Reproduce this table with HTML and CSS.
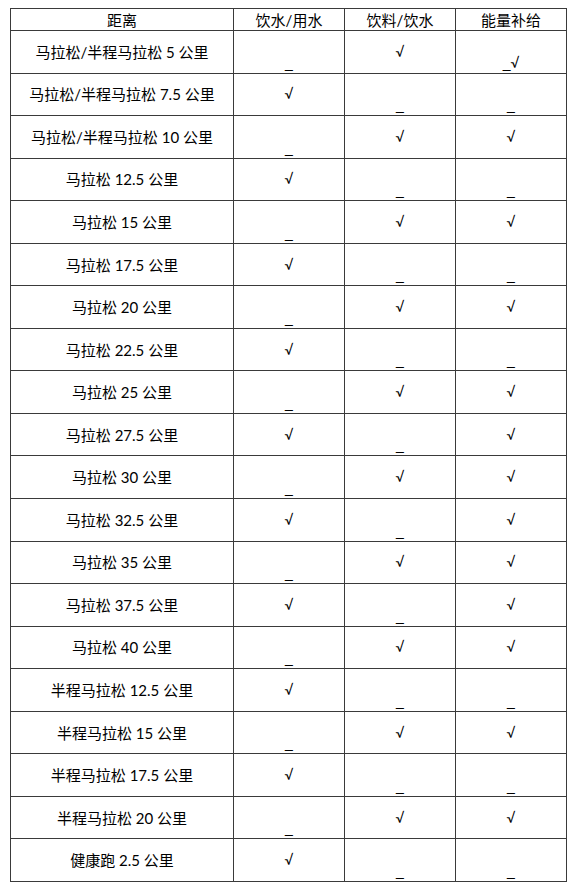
FILE: index.html
```html
<!DOCTYPE html>
<html lang="zh">
<head>
<meta charset="utf-8">
<link rel="stylesheet" href="styles.css">
</head>
<body>
<table class="grid">
<colgroup><col class="c1"><col class="c2"><col class="c3"><col class="c4"></colgroup>
<thead>
<tr class="head"><th>距离</th><th>饮水/用水</th><th>饮料/饮水</th><th>能量补给</th></tr>
</thead>
<tbody>
<tr><td class="name">马拉松/半程马拉松 5 公里</td><td class="low">_</td><td class="mid">√</td><td class="low">_<span class="tick">√</span></td></tr>
<tr><td class="name">马拉松/半程马拉松 7.5 公里</td><td class="mid">√</td><td class="low">_</td><td class="low">_</td></tr>
<tr><td class="name">马拉松/半程马拉松 10 公里</td><td class="low">_</td><td class="mid">√</td><td class="mid">√</td></tr>
<tr><td class="name">马拉松 12.5 公里</td><td class="mid">√</td><td class="low">_</td><td class="low">_</td></tr>
<tr><td class="name">马拉松 15 公里</td><td class="low">_</td><td class="mid">√</td><td class="mid">√</td></tr>
<tr><td class="name">马拉松 17.5 公里</td><td class="mid">√</td><td class="low">_</td><td class="low">_</td></tr>
<tr><td class="name">马拉松 20 公里</td><td class="low">_</td><td class="mid">√</td><td class="mid">√</td></tr>
<tr><td class="name">马拉松 22.5 公里</td><td class="mid">√</td><td class="low">_</td><td class="low">_</td></tr>
<tr><td class="name">马拉松 25 公里</td><td class="low">_</td><td class="mid">√</td><td class="mid">√</td></tr>
<tr><td class="name">马拉松 27.5 公里</td><td class="mid">√</td><td class="low">_</td><td class="mid">√</td></tr>
<tr><td class="name">马拉松 30 公里</td><td class="low">_</td><td class="mid">√</td><td class="mid">√</td></tr>
<tr><td class="name">马拉松 32.5 公里</td><td class="mid">√</td><td class="low">_</td><td class="mid">√</td></tr>
<tr><td class="name">马拉松 35 公里</td><td class="low">_</td><td class="mid">√</td><td class="mid">√</td></tr>
<tr><td class="name">马拉松 37.5 公里</td><td class="mid">√</td><td class="low">_</td><td class="mid">√</td></tr>
<tr><td class="name">马拉松 40 公里</td><td class="low">_</td><td class="mid">√</td><td class="mid">√</td></tr>
<tr><td class="name">半程马拉松 12.5 公里</td><td class="mid">√</td><td class="low">_</td><td class="low">_</td></tr>
<tr><td class="name">半程马拉松 15 公里</td><td class="low">_</td><td class="mid">√</td><td class="mid">√</td></tr>
<tr><td class="name">半程马拉松 17.5 公里</td><td class="mid">√</td><td class="low">_</td><td class="low">_</td></tr>
<tr><td class="name">半程马拉松 20 公里</td><td class="low">_</td><td class="mid">√</td><td class="mid">√</td></tr>
<tr><td class="name">健康跑 2.5 公里</td><td class="mid">√</td><td class="low">_</td><td class="low">_</td></tr>
</tbody>
</table>
</body>
</html>
```
FILE: styles.css
```css
html, body {
  margin: 0;
  padding: 0;
  background: #ffffff;
}
body {
  padding: 8px 0 0 10px;
  font-family: Lato, "Noto Sans CJK SC", sans-serif;
  font-size: 15px;
  color: #000000;
}
.grid {
  border-collapse: collapse;
  table-layout: fixed;
  width: 556px;
}
.c1 { width: 223px; }
.c2 { width: 111px; }
.c3 { width: 111px; }
.c4 { width: 111px; }
.grid th,
.grid td {
  border: 1px solid #3a3a3a;
  padding: 0;
  text-align: center;
  line-height: 20px;
}
.grid th {
  font-weight: normal;
  height: 21px;
  vertical-align: middle;
}
.grid td {
  height: 41.55px;
}
.name {
  vertical-align: middle;
  font-size: 15px;
}
.mid {
  vertical-align: middle;
  font-family: Lato, sans-serif;
  font-size: 14px;
  padding-top: 2px;
}
.low {
  vertical-align: bottom;
  font-family: "Liberation Sans", sans-serif;
  font-size: 14px;
  line-height: 16px;
  padding-bottom: 1px;
}
.tick {
  font-family: Lato, sans-serif;
}
```
